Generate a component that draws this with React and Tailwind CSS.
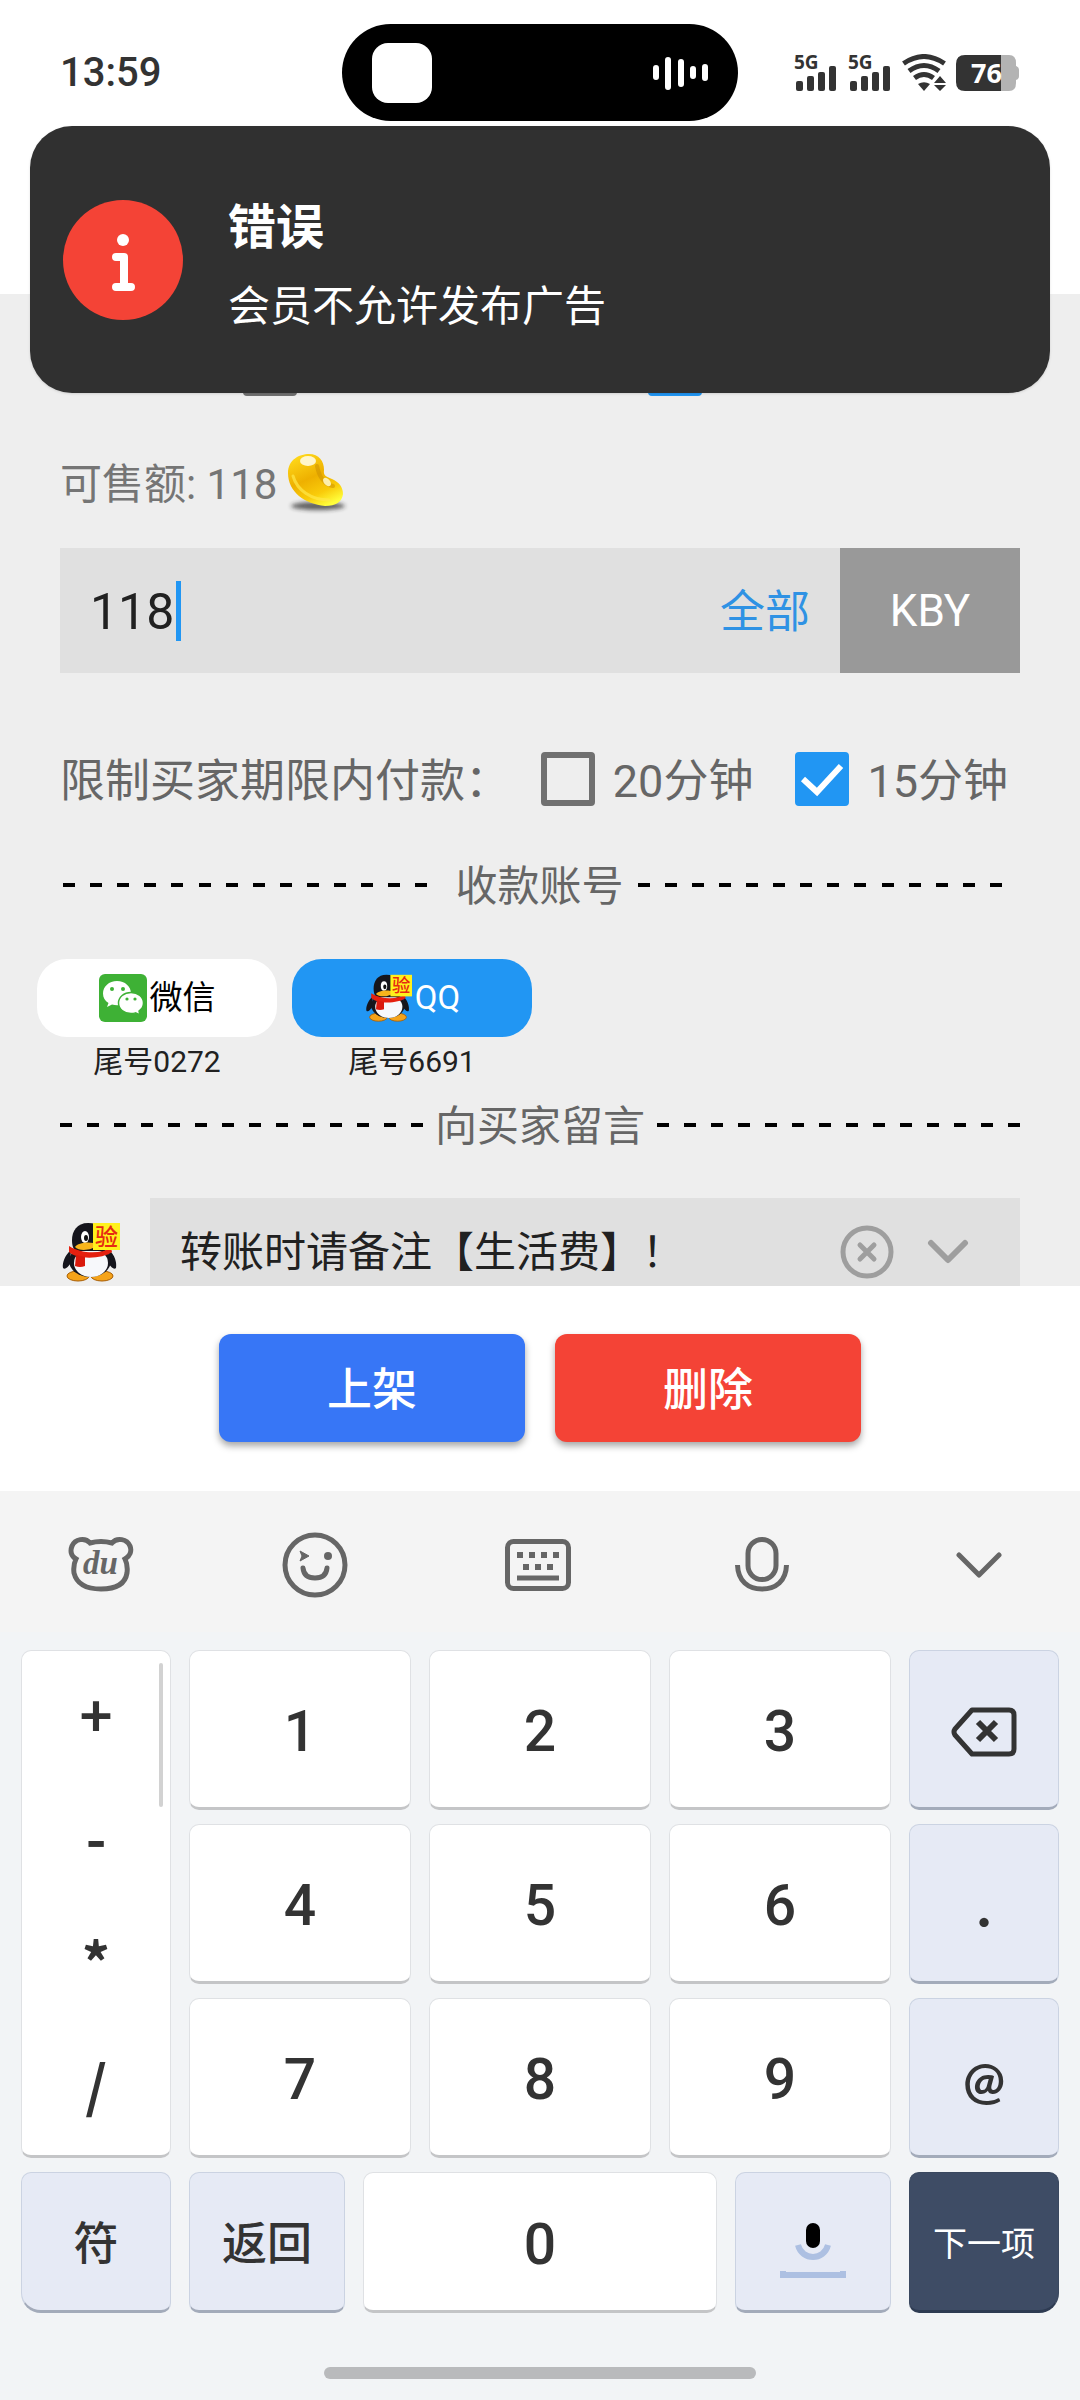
import React, { useState } from "react";
import clsx from "clsx";

const DIGIT_ROWS = [
  ["1", "2", "3"],
  ["4", "5", "6"],
  ["7", "8", "9"],
];

const SYMBOLS = ["+", "-", "*", "/"];

const ACCOUNTS = [
  { id: "wechat", name: "微信", tail: "尾号0272", icon: WechatIcon },
  { id: "qq", name: "QQ", tail: "尾号6691", icon: PenguinIcon },
];

function SignalIcon() {
  return (
    <svg viewBox="0 -8 44 54" className="h-[54px] w-[44px]" fill="#333">
      <text x="0" y="15" fontFamily="'Open Sans', sans-serif" fontSize="19" fontWeight="700">5G</text>
      <rect x="2" y="27" width="7" height="10" rx="2" />
      <rect x="13" y="22" width="7" height="15" rx="2" />
      <rect x="24" y="18" width="7" height="19" rx="2" />
      <rect x="35" y="12" width="7" height="25" rx="2" />
    </svg>
  );
}

function WifiIcon() {
  return (
    <svg viewBox="0 0 44 38" className="h-[38px] w-[44px]">
      <g fill="none" stroke="#333" strokeWidth="5">
        <path d="M1.500 9.500Q22-4.500 42.500 9.500" />
        <path d="M7 17Q22 6 37 17" />
        <path d="M12.500 24Q22 17 31.500 24" />
      </g>
      <path d="M16 30Q22 26.500 28 30L22 37z" fill="#333" />
      <path d="M38 22l6 7H32zM38 37l6-6H32z" fill="#333" />
    </svg>
  );
}

function BatteryIcon() {
  return (
    <svg viewBox="0 0 64 36" className="h-[36px] w-[64px]">
      <path d="M45 0h8q7 0 7 8v3q3 1 3 4v6q0 3-3 4v3q0 8-7 8h-8z" fill="#b3b3b3" />
      <path d="M45 0H9Q0 0 0 9v18q0 9 9 9h36z" fill="#333" />
      <text x="15" y="28" fill="#fff" fontFamily="'Open Sans', sans-serif" fontSize="27" fontWeight="700">76</text>
    </svg>
  );
}

function WaveIcon() {
  return (
    <svg viewBox="0 0 56 36" className="h-[36px] w-[56px]" stroke="#fff" strokeWidth="6" strokeLinecap="round">
      <path d="M4 13v9M16 5v27M29 7v22M41 14v7M53 12v11" />
    </svg>
  );
}

function InfoIcon() {
  return (
    <svg viewBox="0 0 120 120" className="size-[120px] shrink-0">
      <circle cx="60" cy="60" r="60" fill="#f44336" />
      <circle cx="60" cy="40" r="6" fill="#fff" />
      <path d="M53 57h8v30M53 87h15" fill="none" stroke="#fff" strokeWidth="8" strokeLinecap="round" strokeLinejoin="round" />
    </svg>
  );
}

function BeanIcon() {
  return (
    <svg viewBox="0 0 64 64" className="size-[64px]">
      <defs>
        <linearGradient id="bean" x1="0.2" y1="0" x2="0.7" y2="1">
          <stop offset="0" stopColor="#ffd91a" />
          <stop offset="0.45" stopColor="#eeb000" />
          <stop offset="0.75" stopColor="#f9cb0a" />
          <stop offset="1" stopColor="#ffff3c" />
        </linearGradient>
        <filter id="soft" x="-20%" y="-60%" width="140%" height="220%">
          <feGaussianBlur stdDeviation="2" />
        </filter>
      </defs>
      <ellipse cx="31" cy="54" rx="27" ry="4" fill="#222" opacity="0.7" filter="url(#soft)" />
      <path
        d="M22 2C32 2 37 9 37 18C36 24 40 25 45 27C52 30 56 35 56 42C55 50 49 54 38 54C18 52 1 40 1 21C1 8 12 2 22 2z"
        fill="url(#bean)"
      />
      <path d="M6 24C10 38 24 48 42 48" fill="none" stroke="#ffe84a" strokeWidth="3" opacity="0.7" strokeLinecap="round" />
      <path d="M30 14C32 24 36 32 46 34" fill="none" stroke="#c98e00" strokeWidth="4" opacity="0.5" strokeLinecap="round" />
      <ellipse cx="21" cy="9" rx="8" ry="5" fill="#fffbe0" opacity="0.9" />
      <ellipse cx="40" cy="30" rx="3" ry="5" fill="#fff6c0" opacity="0.9" transform="rotate(-40 40 30)" />
    </svg>
  );
}

function WechatIcon({ className }) {
  return (
    <svg viewBox="0 0 48 48" className={className}>
      <rect width="48" height="48" rx="6" fill="#3eb135" />
      <path d="M18 7C10 7 4 12.500 4 19.500c0 4 2 7.500 5.500 9.500L8 33l5-2.500c10 3 19-3 19-11C32 12.500 26 7 18 7z" fill="#fff" />
      <path d="M32 18.500c-7 0-12.500 4.500-12.500 10.500S25 39.500 32 39.500c1.500 0 3-.2 4.500-.6L41 41l-1-4c3-2 4.500-4.800 4.500-8 0-6-5.500-10.500-12.500-10.500z" fill="#fff" stroke="#3eb135" strokeWidth="1.500" />
      <g fill="#3eb135">
        <circle cx="13" cy="15" r="2" />
        <circle cx="24" cy="15" r="2" />
        <circle cx="28" cy="25" r="1.600" />
        <circle cx="36" cy="25" r="1.600" />
      </g>
    </svg>
  );
}

function PenguinIcon({ className }) {
  return (
    <svg viewBox="0 0 60 60" overflow="visible" className={clsx("overflow-visible", className)}>
      <ellipse cx="18" cy="54" rx="11" ry="5" fill="#f5a31a" stroke="#a85c00" />
      <ellipse cx="42" cy="54" rx="11" ry="5" fill="#f5a31a" stroke="#a85c00" />
      <path d="M11 28C5 33 2 41 3 46c2 2 5-1 7-4zM49 28c6 5 8 13 7 18-2 2-5-1-7-4z" fill="#15151c" />
      <ellipse cx="30" cy="39" rx="21" ry="16" fill="#15151c" />
      <ellipse cx="31" cy="41" rx="17" ry="14" fill="#f7f8fb" />
      <path d="M28 1C17 1 12 9 12 18c0 5 1 9 4 11h26c4-3 5-8 5-12C46 8 40 1 28 1z" fill="#15151c" />
      <ellipse cx="25" cy="15" rx="4" ry="6" fill="#fff" />
      <ellipse cx="26" cy="16" rx="2" ry="3" fill="#111" />
      <path d="M15 25c3-5 18-6 22-2-3 5-18 7-22 2z" fill="#f8b51c" />
      <path d="M9 24c12 8 32 8 42 2l1 4c-9 7-35 8-43 0z" fill="#e5200f" />
      <path d="M16 33l9 2v9q-5 2-10 0z" fill="#d9190d" />
      <rect x="33" y="1" width="27" height="27" fill="#fff11c" />
      <text x="35" y="23" fill="#e62a12" fontFamily="'Noto Sans CJK SC', sans-serif" fontSize="23" fontWeight="500">验</text>
    </svg>
  );
}

function CheckBox({ label, checked, onChange }) {
  return (
    <span className="relative size-[54px] shrink-0">
      <input
        type="checkbox"
        id={label}
        aria-label={label}
        checked={checked}
        onChange={onChange}
        className="block size-[54px] appearance-none rounded-[4px] border-6 border-[#707070] checked:border-[#2196f3] checked:bg-[#2196f3]"
      />
      {checked && (
        <svg viewBox="0 0 54 54" className="pointer-events-none absolute inset-0" fill="none" stroke="#fff" strokeWidth="6">
          <path d="M8 27l14 13L46 14" />
        </svg>
      )}
    </span>
  );
}

function Dashes() {
  return (
    <span className="flex flex-1 justify-between">
      {Array.from({ length: 14 }, (_, i) => (
        <span key={i} className="h-[4px] w-[12px] bg-black" />
      ))}
    </span>
  );
}

function Key({ tone = "white", className, children, ...rest }) {
  return (
    <button
      className={clsx(
        "flex items-center justify-center rounded-[10px] border border-b-3 pt-[6px]",
        tone === "white" && "border-[#dfe1e4] border-b-[#c4c5c7] bg-white text-[#333]",
        tone === "blue" && "border-[#cbd3e2] border-b-[#a3abba] bg-[#e6eaf5] text-[#333]",
        tone === "dark" && "border-[#3a485f] border-b-[#2e3b52] bg-[#3e4c65] text-white",
        className
      )}
      {...rest}
    >
      {children}
    </button>
  );
}

function StatusBar() {
  return (
    <header className="h-[294px] shrink-0 bg-white">
      <div className="flex h-[146px] items-center justify-between px-[60px]">
        <span className="text-[40px] font-medium text-[#333]">13:59</span>
        <div className="flex items-center gap-[10px]">
          <SignalIcon />
          <SignalIcon />
          <WifiIcon />
          <BatteryIcon />
        </div>
      </div>
      {/* Dynamic island */}
      <div className="absolute top-[24px] left-1/2 flex h-[97px] w-[396px] -translate-x-1/2 items-center justify-between rounded-full bg-black pr-[30px] pl-[30px]">
        <span className="size-[60px] rounded-[16px] bg-white" />
        <WaveIcon />
      </div>
    </header>
  );
}

function Toast() {
  return (
    <div role="alert" className="absolute inset-x-[30px] top-[126px] flex h-[267px] items-center gap-[45px] rounded-[42px] bg-[#303030] px-[33px] text-white shadow-sm">
      <InfoIcon />
      <div className="flex flex-col gap-[14px] pt-[10px]">
        <h2 className="text-[48px] leading-[70px] font-bold">错误</h2>
        <p className="text-[42px] leading-[60px]">会员不允许发布广告</p>
      </div>
    </div>
  );
}

function Keyboard() {
  return (
    <section className="shrink-0 bg-[#f2f4f6]">
      {/* Toolbar */}
      <div className="flex h-[141px] items-center bg-[#f4f4f4] px-[68px] pt-[6px] text-[#666]">
        <button aria-label="du">
          <svg viewBox="0 0 66 58" className="h-[58px] w-[66px]" fill="none" stroke="currentColor" strokeWidth="5">
            <path d="M22 7Q33 4 44 7C49 1 59 3 62 10C64 15 62 20 57 23Q60 29 59 37C57 49 47 53 33 53S9 49 6 37Q5 29 8 23C3 20 2 15 4 10C7 3 17 1 22 7z" />
            <text x="15" y="38" fill="currentColor" stroke="none" fontFamily="'Liberation Serif', serif" fontStyle="italic" fontWeight="700" fontSize="33">du</text>
          </svg>
        </button>
        <button aria-label="表情" className="ml-[148px]">
          <svg viewBox="0 0 66 66" className="size-[66px]" fill="none" stroke="currentColor" strokeWidth="5">
            <circle cx="33" cy="33" r="30" />
            <path d="M21 36Q22 46 33 46T45 36" strokeLinecap="round" />
            <path d="M18 19l9 5-9 5 2-5z" fill="currentColor" strokeWidth="1" strokeLinejoin="round" />
            <circle cx="46" cy="24" r="4" fill="currentColor" stroke="none" />
          </svg>
        </button>
        <button aria-label="键盘" className="ml-[157px]">
          <svg viewBox="0 0 66 52" className="h-[52px] w-[66px]" fill="none" stroke="currentColor" strokeWidth="5">
            <rect x="2.500" y="2.500" width="61" height="47" rx="6" />
            <path d="M12 16h6M24 16h6M36 16h6M48 16h6M18 28h6M30 28h6M42 28h6" strokeWidth="6" />
            <path d="M12 39h42" />
          </svg>
        </button>
        <button aria-label="语音" className="ml-[164px]">
          <svg viewBox="0 0 54 56" className="h-[56px] w-[54px]" fill="none" stroke="currentColor" strokeWidth="5">
            <rect x="13" y="2.500" width="28" height="40" rx="14" />
            <path d="M2.500 28C3 44 13 52 27 52S51 44 51.500 28" />
          </svg>
        </button>
        <button aria-label="收起" className="ml-[167px]">
          <svg viewBox="0 0 46 26" className="h-[26px] w-[46px]" fill="none" stroke="currentColor" strokeWidth="5" strokeLinecap="round" strokeLinejoin="round">
            <path d="M3 3l20 20L43 3" />
          </svg>
        </button>
      </div>

      <div className="px-[21px] pt-[18px]">
        <div className="grid grid-cols-[150fr_222fr_222fr_222fr_150fr] gap-x-[18px]">
          <div className="relative flex flex-col rounded-[10px] border border-b-3 border-[#dfe1e4] border-b-[#c4c5c7] bg-white pb-[10px]">
            {SYMBOLS.map((s) => (
              <button key={s} className="flex-1 [font-family:'Noto_Sans_CJK_SC',sans-serif] text-[56px] leading-none font-bold text-[#333]">
                {s}
              </button>
            ))}
            <span className="absolute top-[12px] right-[7px] h-[144px] w-[4px] rounded-full bg-[#d2d2d2]" />
          </div>
          <div className="col-span-3 flex flex-col gap-[14px]">
            {DIGIT_ROWS.map((row) => (
              <div key={row[0]} className="grid grid-cols-3 gap-x-[18px]">
                {row.map((d) => (
                  <Key key={d} className="h-[160px] text-[57px] font-medium">{d}</Key>
                ))}
              </div>
            ))}
          </div>
          <div className="flex flex-col gap-[14px]">
            <Key tone="blue" aria-label="删除字符" className="h-[160px]">
              <svg viewBox="0 0 66 50" className="h-[50px] w-[66px]" fill="none" stroke="currentColor" strokeWidth="5" strokeLinejoin="round">
                <path d="M21 3h37q5 0 5 5v34q0 5-5 5H21L4 28q-2-3 0-6z" />
                <path d="M27 15l18 18M45 15L27 33" strokeWidth="6" />
              </svg>
            </Key>
            <Key tone="blue" className="h-[160px] [font-family:Lato,sans-serif] text-[57px] font-black">.</Key>
            <Key tone="blue" className="h-[160px] [font-family:Lato,sans-serif] text-[50px] leading-[50px] font-bold">@</Key>
          </div>
        </div>

        <div className="mt-[14px] grid grid-cols-[150fr_156fr_354fr_156fr_150fr] gap-x-[18px] text-[45px] font-medium">
          <Key tone="blue" className="h-[141px] rounded-bl-[20px]">符</Key>
          <Key tone="blue" className="h-[141px]">返回</Key>
          <Key className="h-[141px] text-[57px]">0</Key>
          <Key tone="blue" aria-label="按住说话" className="h-[141px]">
            <svg viewBox="0 0 66 56" className="mt-[12px] h-[56px] w-[66px]" fill="none" stroke="#adc0e2">
              <rect x="26" y="0" width="14" height="25" rx="7" fill="#000" stroke="none" />
              <path d="M18 22C22 38 44 38 48 22" strokeWidth="6" />
              <path d="M3 48v4h60v-4" strokeWidth="6" />
            </svg>
          </Key>
          <Key tone="dark" className="h-[141px] rounded-br-[20px] text-[34px] font-normal">下一项</Key>
        </div>
      </div>

      <div className="flex h-[87px] justify-center pt-[54px]">
        <span className="h-[12px] w-[432px] rounded-full bg-[#b9babc]" />
      </div>
    </section>
  );
}

export default function App() {
  const [amount, setAmount] = useState("118");
  const [message, setMessage] = useState("转账时请备注【生活费】！");
  const [minutes, setMinutes] = useState(15);
  const [account, setAccount] = useState("qq");

  return (
    <div className="relative flex h-screen flex-col overflow-hidden bg-[#eee] [font-family:Roboto,'Noto_Sans_CJK_SC',sans-serif]">
      <StatusBar />

      <main className="min-h-0 flex-1 overflow-hidden text-[#666]">
        <div className="px-[60px] pt-[48px]">
          <div className="flex gap-[351px] pl-[183px]">
            <CheckBox label="选项一" checked={false} onChange={() => {}} />
            <CheckBox label="选项二" checked onChange={() => {}} />
          </div>

          <div className="mt-[56px] flex h-[64px] items-center gap-[10px] text-[42px] text-[#757575]">
            <span>可售额: 118</span>
            <BeanIcon />
          </div>

          <div className="mt-[32px] flex h-[125px] text-[45px]">
            <div className="flex flex-1 items-center bg-[#e0e0e0] px-[30px]">
              <input
                aria-label="数量"
                value={amount}
                onChange={(e) => setAmount(e.target.value)}
                className="w-[86px] bg-transparent pt-[4px] text-[50px] text-[#212121] outline-none"
              />
              <span className="h-[60px] w-[5px] bg-[#2196f3]" />
              <button className="ml-auto pt-[4px] text-[#2f92e4]">全部</button>
            </div>
            <div className="flex w-[180px] items-center justify-center bg-[#999] text-[44px] text-white">KBY</div>
          </div>

          <div className="mt-[76px] flex items-center text-[45px] leading-[54px]">
            <span className="pt-[6px]">限制买家期限内付款：</span>
            <div className="ml-auto flex items-center gap-[18px]">
              <CheckBox label="20min" checked={minutes === 20} onChange={() => setMinutes(20)} />
              <label htmlFor="20min" className="pt-[6px]">20分钟</label>
            </div>
            <div className="mr-[12px] ml-[42px] flex items-center gap-[18px]">
              <CheckBox label="15min" checked={minutes === 15} onChange={() => setMinutes(15)} />
              <label htmlFor="15min" className="pt-[6px]">15分钟</label>
            </div>
          </div>

          <div className="mt-[44px] flex items-center pr-[18px] pl-[3px] text-[42px] leading-[60px]">
            <Dashes />
            <h3 className="mr-[14px] ml-[28px] pt-[4px]">收款账号</h3>
            <Dashes />
          </div>
        </div>

        <div className="mt-[42px] flex gap-[15px] px-[37px]">
          {ACCOUNTS.map(({ id, name, tail, icon: Icon }) => (
            <div key={id} className="flex w-[240px] flex-col items-center gap-[5px]">
              <button
                onClick={() => setAccount(id)}
                className={clsx(
                  "flex h-[78px] w-full items-center justify-center gap-[3px] rounded-[30px] text-[33px]",
                  account === id ? "bg-[#2196f3] text-white" : "bg-white text-black"
                )}
              >
                <Icon className="size-[48px]" />
                {name}
              </button>
              <span className="text-[30px] leading-[40px] text-[#212121]">{tail}</span>
            </div>
          ))}
        </div>

        <div className="mt-[11px] px-[60px]">
          <div className="flex items-center text-[42px] leading-[60px]">
            <Dashes />
            <h3 className="mx-[12px] pt-[4px]">向买家留言</h3>
            <Dashes />
          </div>

          <div className="mt-[41px] flex items-center gap-[30px]">
            <PenguinIcon className="size-[60px]" />
            <div className="flex h-[108px] flex-1 items-center bg-[#e0e0e0] pr-[51px] pl-[30px] text-[#9e9e9e]">
              <input
                aria-label="向买家留言"
                value={message}
                onChange={(e) => setMessage(e.target.value)}
                className="min-w-0 flex-1 bg-transparent text-[42px] text-[#212121] outline-none"
              />
              <button aria-label="清除">
                <svg viewBox="0 0 54 54" className="size-[54px]" fill="none" stroke="currentColor" strokeWidth="5">
                  <circle cx="27" cy="27" r="24" />
                  <path d="M20 20l14 14M34 20L20 34" strokeLinecap="round" />
                </svg>
              </button>
              <button aria-label="展开" className="ml-[33px]">
                <svg viewBox="0 0 42 26" className="h-[26px] w-[42px]" fill="none" stroke="currentColor" strokeWidth="6" strokeLinecap="round" strokeLinejoin="round">
                  <path d="M4 4l17 17L38 4" />
                </svg>
              </button>
            </div>
          </div>
        </div>
      </main>

      <footer className="flex h-[205px] shrink-0 justify-center gap-[30px] bg-white pt-[48px] text-[45px] font-medium text-white">
        <button className="h-[108px] w-[306px] rounded-[12px] bg-[#3776f6] pt-[5px] shadow-[0_4px_7px_rgba(0,0,0,0.35)]">上架</button>
        <button className="h-[108px] w-[306px] rounded-[12px] bg-[#f44336] pt-[5px] shadow-[0_4px_7px_rgba(0,0,0,0.35)]">删除</button>
      </footer>

      <Keyboard />
      <Toast />
    </div>
  );
}
